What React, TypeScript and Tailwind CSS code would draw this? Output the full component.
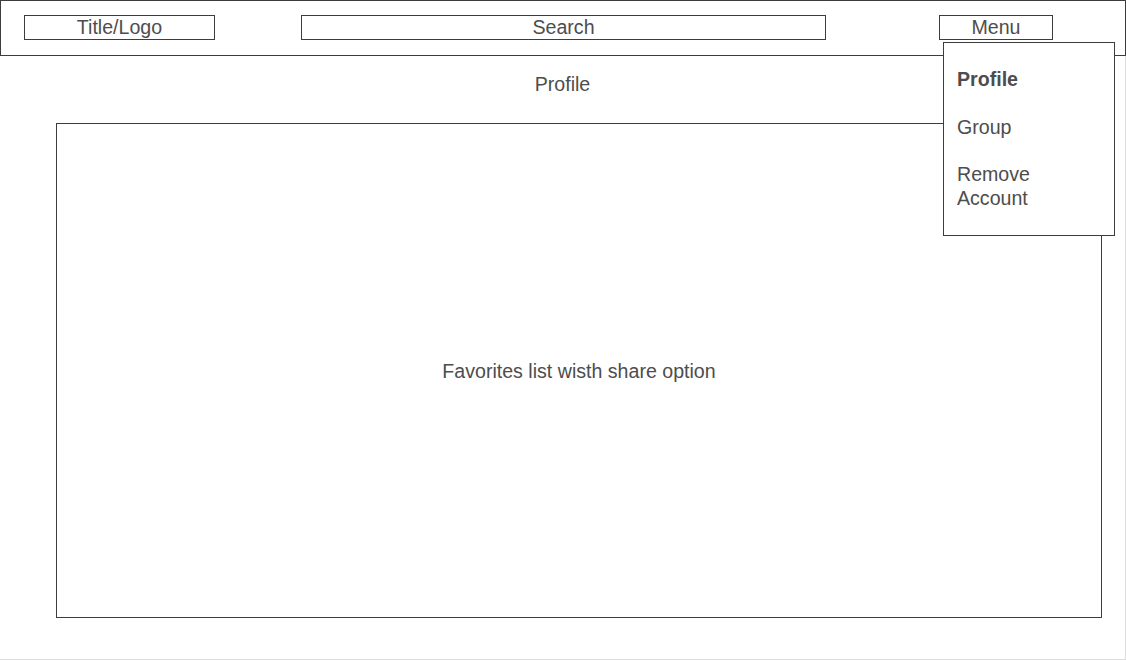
import React from 'react';

const font = { fontFamily: '"Liberation Sans", Arial, sans-serif' };

export default function App() {
  return (
    <div
      className="relative w-[1126px] h-[660px] bg-white text-[19.6px] leading-[24px] text-[#4d4d4d]"
      style={font}
    >
      {/* top bar */}
      <header className="h-[56px] border border-[#3d3d3d] flex items-start pt-[14px]">
        <div className="ml-[23px] w-[191px] h-[25px] border border-[#3d3d3d] flex items-center justify-center pb-[2px]">
          Title/Logo
        </div>
        <div className="ml-[86px] w-[525px] h-[25px] border border-[#3d3d3d] flex items-center justify-center pb-[2px]">
          Search
        </div>
        <div className="ml-[113px] w-[114px] h-[25px] border border-[#3d3d3d] flex items-center justify-center pb-[2px]">
          Menu
        </div>
      </header>

      {/* page body */}
      <main className="h-[604px] border-r border-b border-[#dddddd] flex flex-col">
        <div className="mt-[16px] text-center">Profile</div>
        <div className="mt-[27px] ml-[56px] w-[1046px] h-[495px] border border-[#3d3d3d] flex items-center justify-center">
          Favorites list wisth share option
        </div>
      </main>

      {/* open menu */}
      <div className="absolute left-[943px] top-[42px] w-[172px] h-[194px] bg-white border border-[#3d3d3d] px-[13px] pt-[24px] flex flex-col">
        <div className="font-bold">Profile</div>
        <div className="mt-[24px]">Group</div>
        <div className="mt-[23px]">
          Remove
          <br />
          Account
        </div>
      </div>
    </div>
  );
}
